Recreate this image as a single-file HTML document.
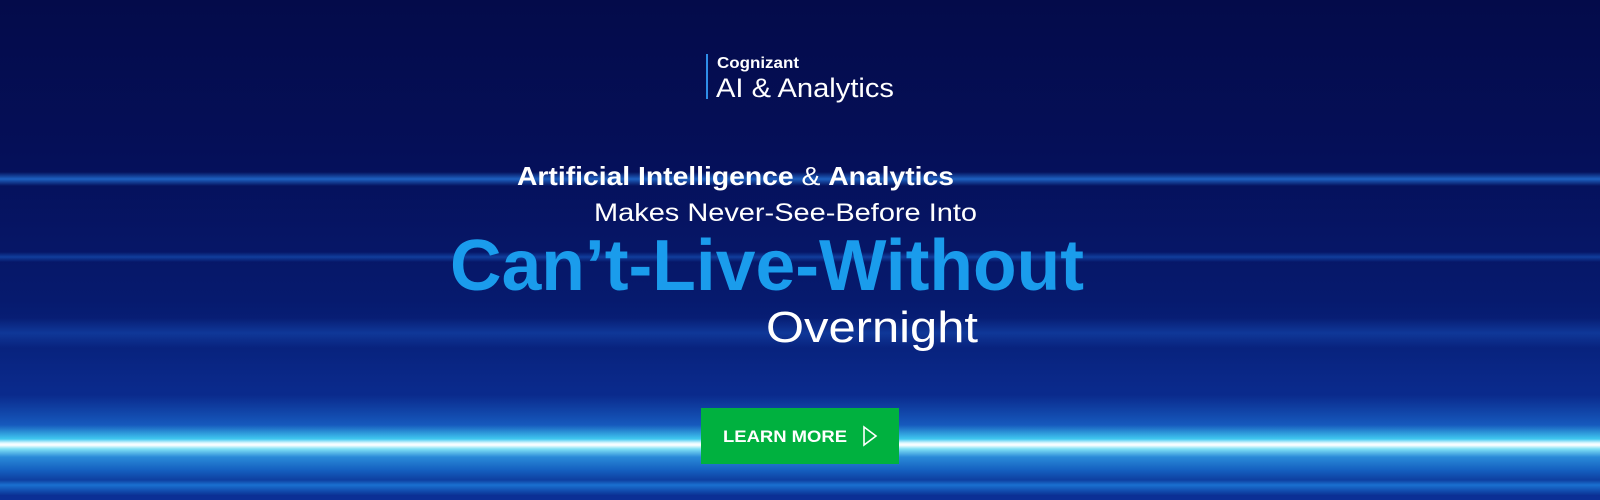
<!DOCTYPE html>
<html><head><meta charset="utf-8"><style>
html,body{margin:0;padding:0}
body{width:1600px;height:500px;overflow:hidden;position:relative;font-family:"Liberation Sans",sans-serif;
background:linear-gradient(180deg,#040b4a 0%,#050f58 30%,#061a6e 60%,#0a2a8c 78%,#0b2f95 100%);}
.s{position:absolute;left:0;width:1600px}
</style></head><body>
<div class="s" style="top:172px;height:14px;background:linear-gradient(180deg,rgba(30,110,220,0),rgba(40,130,235,.7) 50%,rgba(30,110,220,0))"></div>
<div class="s" style="top:252px;height:10px;background:linear-gradient(180deg,rgba(30,100,210,0),rgba(30,110,220,.45) 50%,rgba(30,100,210,0))"></div>
<div class="s" style="top:318px;height:30px;background:linear-gradient(180deg,rgba(30,100,210,0),rgba(30,100,210,.35) 50%,rgba(30,100,210,0))"></div>
<div class="s" style="top:395px;height:100px;background:linear-gradient(180deg,rgba(20,90,200,0) 0%,rgba(30,120,220,.6) 30%,#40c8f0 44%,#dff8ff 48%,#ffffff 50%,#7fe0f5 54%,#2a8ad8 62%,#1560c0 75%,#0e3fa0 85%,#1a70d0 90%,#0b3396 100%)"></div>
<svg width="1600" height="500" style="position:absolute;left:0;top:0">
<rect x="706" y="54" width="2" height="45" fill="#2f8ee8"/>
<text x="717" y="68" font-size="16" font-weight="bold" fill="#fff" textLength="82" lengthAdjust="spacingAndGlyphs">Cognizant</text>
<text x="716" y="97" font-size="27" fill="#fff" textLength="178" lengthAdjust="spacingAndGlyphs">AI &amp; Analytics</text>
<text x="517" y="185" font-size="26" fill="#fff" textLength="437" lengthAdjust="spacingAndGlyphs"><tspan font-weight="bold">Artificial Intelligence</tspan> &amp; <tspan font-weight="bold">Analytics</tspan></text>
<text x="594" y="221" font-size="25" fill="#fff" textLength="383" lengthAdjust="spacingAndGlyphs">Makes Never-See-Before Into</text>
<text x="450" y="290" font-size="72" font-weight="bold" fill="#1a9cec" textLength="634" lengthAdjust="spacingAndGlyphs">Can’t-Live-Without</text>
<text x="766" y="342" font-size="44" fill="#fff" textLength="212" lengthAdjust="spacingAndGlyphs">Overnight</text>
<rect x="701" y="408" width="198" height="56" fill="#00b13f"/>
<text x="723" y="442" font-size="17" font-weight="bold" fill="#fff" textLength="124" lengthAdjust="spacingAndGlyphs">LEARN MORE</text>
<path d="M864 427 L876 436 L864 445 Z" fill="none" stroke="#fff" stroke-width="1.6"/>
</svg>
</body></html>
